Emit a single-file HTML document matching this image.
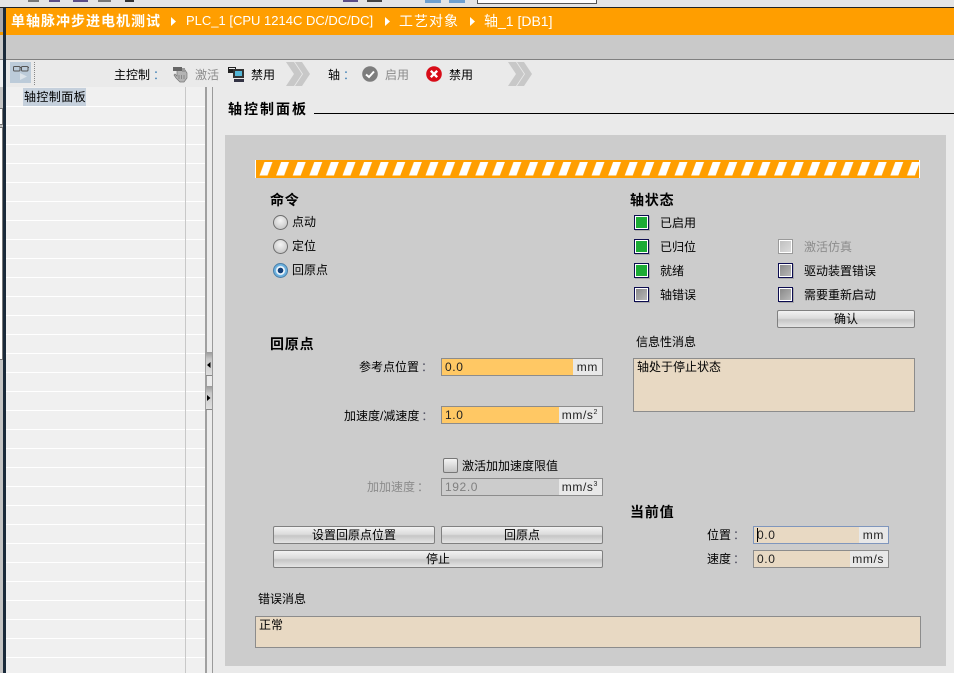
<!DOCTYPE html>
<html><head><meta charset="utf-8">
<style>
html,body{margin:0;padding:0}
body{width:954px;height:673px;overflow:hidden;position:relative;background:#eaeaea;font-family:"Liberation Sans","WenQuanYi Zen Hei","Noto Sans CJK SC",sans-serif;font-size:12px;color:#000}
div,svg{position:absolute;box-sizing:border-box}
.t{white-space:nowrap;line-height:16px;height:16px}
.b{font-weight:bold;font-size:14px;letter-spacing:.8px}
.g{color:#8c8c8c}
.c{color:#4a86b8;margin-left:3px}
.d{color:#556;margin-left:2px}
.r{width:15px;height:15px;border-radius:50%;border:1.5px solid #6e6e6e;background:radial-gradient(circle at 50% 35%,#f4f4f4,#bcbcbc)}
.s{width:15px;height:15px;border:1px solid #0c0c50;background:#fff;box-shadow:1px 1px 0 #aaa}
.s i{position:absolute;left:1px;top:1px;width:11px;height:11px;display:block}
.on i{background:#1bab35}
.off i{background:linear-gradient(135deg,#8a8a8a,#b8b8b8)}
.btn{background:linear-gradient(#f2f2f2,#dcdcdc 45%,#c6c6c6 55%,#e4e4e4);border:1px solid #808080;border-radius:2px;text-align:center;line-height:16px}
.inp{border:1px solid #8c8c8c;background:#e8e8e8;height:18px}
.inp i{position:absolute;left:0;top:0;bottom:0;display:block}
.inp b{position:absolute;left:3px;top:0;line-height:16px;font-weight:normal;letter-spacing:.6px;color:#222}
.inp u{position:absolute;right:4px;top:0;line-height:16px;text-decoration:none;letter-spacing:.6px;color:#222}
sup{font-size:7px;line-height:0}
</style></head><body>

<!-- top sliver -->
<div style="left:0;top:0;width:954px;height:7px;background:#e4e4e4"></div>
<div style="left:28px;top:0;width:11px;height:2px;background:#777"></div>
<div style="left:49px;top:0;width:11px;height:2px;background:#5b4d86"></div>
<div style="left:73px;top:0;width:15px;height:2px;background:#5b4d86"></div>
<div style="left:98px;top:0;width:13px;height:2px;background:#777"></div>
<div style="left:125px;top:0;width:9px;height:2px;background:#333"></div>
<div style="left:343px;top:0;width:15px;height:2px;background:#5b4d86"></div>
<div style="left:367px;top:0;width:15px;height:2px;background:#444"></div>
<div style="left:425px;top:0;width:16px;height:3px;background:#6fa0d0"></div>
<div style="left:449px;top:0;width:16px;height:3px;background:#6fa0d0"></div>
<div style="left:477px;top:0;width:120px;height:4px;background:#fff;border:1px solid #555;border-top:0"></div>
<div style="left:0;top:7px;width:954px;height:1px;background:#222"></div>

<!-- left strip -->
<div style="left:0;top:8px;width:3px;height:665px;background:#c4c4c4"></div>
<div style="left:0;top:8px;width:3px;height:24px;background:#a8a8ac"></div>
<div style="left:0;top:32px;width:3px;height:3px;background:#f29a00"></div>
<div style="left:0;top:35px;width:3px;height:24px;background:#c9c9c9"></div>
<div style="left:0;top:59px;width:3px;height:1px;background:#808080"></div>
<div style="left:0;top:60px;width:3px;height:27px;background:#f0f0f0"></div>
<div style="left:0;top:108px;width:3px;height:17px;background:#fff;border:1px solid #777;border-left:0"></div>
<div style="left:0;top:127px;width:3px;height:233px;background:#fff;border:1px solid #777;border-left:0"></div>
<div style="left:3px;top:8px;width:3px;height:665px;background:#1a2a3a"></div>

<!-- orange bar -->
<div style="left:6px;top:8px;width:948px;height:27px;background:#ff9e00"></div>
<div class="t" style="left:11px;top:13px;color:#fff;font-weight:bold;font-size:14px;letter-spacing:1px">单轴脉冲步进电机测试</div>
<svg style="left:171px;top:17px" width="6" height="9"><path d="M0 0L5 4.5L0 9Z" fill="#fff"/></svg>
<div class="t" style="left:186px;top:13px;color:#fff;font-size:13px">PLC_1 [CPU 1214C DC/DC/DC]</div>
<svg style="left:385px;top:17px" width="6" height="9"><path d="M0 0L5 4.5L0 9Z" fill="#fff"/></svg>
<div class="t" style="left:399px;top:13px;color:#fff;font-size:14px;letter-spacing:1px">工艺对象</div>
<svg style="left:470px;top:17px" width="6" height="9"><path d="M0 0L5 4.5L0 9Z" fill="#fff"/></svg>
<div class="t" style="left:484px;top:13px;color:#fff;font-size:14px">轴_1 [DB1]</div>

<!-- gray band -->
<div style="left:6px;top:35px;width:948px;height:24px;background:#c9c9c9"></div>
<div style="left:6px;top:59px;width:948px;height:1px;background:#808080"></div>

<!-- toolbar -->
<div style="left:6px;top:60px;width:948px;height:27px;background:#eaeaea"></div>
<div style="left:10px;top:62px;width:21px;height:21px;background:#bccbd9"></div>
<svg style="left:10px;top:62px" width="21" height="21"><rect x="3.500" y="4.500" width="6.500" height="4.500" rx="1" fill="none" stroke="#555"/><rect x="11.500" y="4.500" width="6.500" height="4.500" rx="1" fill="none" stroke="#555"/><path d="M10 5.500h1.500M18 5.500h1" stroke="#555"/><path d="M10 11l7 3.500-7 3.500z" fill="#dde4ea"/></svg>
<div style="left:34px;top:62px;width:1px;height:23px;border-left:1px dotted #888"></div>

<div class="t" style="left:114px;top:67px">主控制<span class="c">：</span></div>
<svg style="left:172px;top:66px" width="17" height="17"><path d="M5 6l0-2 8 0 2 3v5l-3 4H8L4 12 2 9l1-1 2 2z" fill="#b4b4b4" stroke="#777" stroke-width=".7"/><path d="M1 1h9v4H1z" fill="#666"/><path d="M10 2h3v4h-3z" fill="#999"/><path d="M7 9v4M9.500 9v4M12 9v4" stroke="#777" stroke-width=".7"/></svg>
<div class="t g" style="left:195px;top:67px">激活</div>
<svg style="left:228px;top:66px" width="18" height="17"><rect x="0" y="1" width="8" height="6" fill="#222"/><rect x="5" y="3" width="11" height="9" fill="#333"/><rect x="7" y="5" width="7" height="5" fill="#54b7d8"/><rect x="6" y="13" width="10" height="3" fill="#334"/><path d="M1 2h6v1H1z" fill="#eee"/></svg>
<div class="t" style="left:251px;top:67px">禁用</div>
<svg style="left:286px;top:62px" width="25" height="24"><path d="M0 0h8l8 12-8 12H0l8-12zM9 0h7l8 12-8 12H9l8-12z" fill="#c8c8c8"/></svg>

<div class="t" style="left:328px;top:67px">轴<span class="c">：</span></div>
<svg style="left:362px;top:66px" width="16" height="16"><circle cx="8" cy="8" r="7.800" fill="#7d7d7d"/><path d="M4 8.500l3 2.500 5-5.500" fill="none" stroke="#fff" stroke-width="2"/></svg>
<div class="t g" style="left:385px;top:67px">启用</div>
<svg style="left:426px;top:66px" width="16" height="16"><circle cx="8" cy="8" r="7.800" fill="#d80c18"/><path d="M4.800 4.800l6.400 6.400M11.200 4.800l-6.400 6.400" stroke="#fff" stroke-width="2.400"/></svg>
<div class="t" style="left:449px;top:67px">禁用</div>
<svg style="left:508px;top:62px" width="25" height="24"><path d="M0 0h8l8 12-8 12H0l8-12zM9 0h7l8 12-8 12H9l8-12z" fill="#c8c8c8"/></svg>

<!-- tree -->
<div style="left:6px;top:88px;width:199px;height:585px;background:repeating-linear-gradient(#f0f0f0 0,#f0f0f0 18px,#fff 18px,#fff 19px)"></div>
<div style="left:6px;top:87px;width:199px;height:1px;background:#f0f0f0"></div>
<div style="left:23px;top:88px;width:63px;height:18px;background:#c5d0dc"></div>
<div class="t" style="left:24px;top:89px;letter-spacing:.4px">轴控制面板</div>
<div style="left:185px;top:87px;width:1px;height:586px;background:#c8c8c8"></div>

<!-- splitter -->
<div style="left:205px;top:87px;width:2px;height:586px;background:#a0a0a0"></div>
<div style="left:207px;top:87px;width:5px;height:586px;background:#ececec"></div>
<div style="left:212px;top:87px;width:1px;height:586px;background:#9a9a9a"></div>
<div style="left:206px;top:352px;width:6px;height:24px;background:linear-gradient(#9a9a9a,#c8c8c8 30%,#e0e0e0)"></div>
<div style="left:206px;top:375px;width:6px;height:1px;background:#888"></div>
<div style="left:206px;top:386px;width:6px;height:24px;background:linear-gradient(#9a9a9a,#c8c8c8 30%,#e0e0e0)"></div>
<div style="left:206px;top:409px;width:6px;height:1px;background:#888"></div>
<svg style="left:207px;top:362px" width="4" height="6"><path d="M3.500 0v6L0 3z" fill="#000"/></svg>
<svg style="left:207px;top:395px" width="4" height="6"><path d="M0 0v6L3.500 3z" fill="#000"/></svg>

<!-- title -->
<div class="t b" style="left:228px;top:101px;letter-spacing:2px">轴控制面板</div>
<div style="left:314px;top:113px;width:640px;height:1px;background:#000"></div>

<!-- panel -->
<div style="left:225px;top:135px;width:721px;height:531px;background:#cccccc"></div>

<!-- hazard -->
<div style="left:255px;top:160px;width:665px;height:18px;background:#ff9e00;border-left:1px solid #fff;border-right:1px solid #fff;overflow:hidden">
<svg style="left:0;top:0" width="665" height="18"><defs><pattern id="h" width="16.6" height="18" patternUnits="userSpaceOnUse"><path d="M8.500 2h8l-5 13.500h-8z" fill="#fff"/></pattern></defs><rect x="0" y="0" width="665" height="18" fill="url(#h)"/></svg>
</div>

<!-- command -->
<div class="t b" style="left:270px;top:192px">命令</div>
<div class="r" style="left:273px;top:215px"></div>
<div class="t" style="left:292px;top:214px">点动</div>
<div class="r" style="left:273px;top:239px"></div>
<div class="t" style="left:292px;top:238px">定位</div>
<div class="r" style="left:273px;top:263px;border-color:#4b7fa8;background:radial-gradient(circle,#123f78 0 2.600px,#f2f8fc 3px 4px,#6bb0de 5px)"></div>
<div class="t" style="left:292px;top:262px">回原点</div>

<!-- axis status -->
<div class="t b" style="left:630px;top:192px">轴状态</div>
<div class="s on" style="left:634px;top:215px"><i></i></div>
<div class="t" style="left:660px;top:215px">已启用</div>
<div class="s on" style="left:634px;top:239px"><i></i></div>
<div class="t" style="left:660px;top:239px">已归位</div>
<div class="s on" style="left:634px;top:263px"><i></i></div>
<div class="t" style="left:660px;top:263px">就绪</div>
<div class="s off" style="left:634px;top:287px"><i></i></div>
<div class="t" style="left:660px;top:287px">轴错误</div>
<div class="s" style="left:778px;top:239px;border-color:#9a9a9a;box-shadow:none"><i style="background:linear-gradient(135deg,#c0c0c0,#dcdcdc)"></i></div>
<div class="t g" style="left:804px;top:239px">激活仿真</div>
<div class="s off" style="left:778px;top:263px"><i></i></div>
<div class="t" style="left:804px;top:263px">驱动装置错误</div>
<div class="s off" style="left:778px;top:287px"><i></i></div>
<div class="t" style="left:804px;top:287px">需要重新启动</div>
<div class="btn" style="left:777px;top:310px;width:138px;height:18px">确认</div>

<!-- homing -->
<div class="t b" style="left:270px;top:336px">回原点</div>
<div class="t" style="left:359px;top:359px">参考点位置<span class="d">：</span></div>
<div class="inp" style="left:441px;top:358px;width:162px"><i style="width:131px;background:#ffc864"></i><b>0.0</b><u>mm</u></div>
<div class="t" style="left:344px;top:408px">加速度/减速度<span class="d">：</span></div>
<div class="inp" style="left:441px;top:406px;width:162px"><i style="width:117px;background:#ffc864"></i><b>1.0</b><u>mm/s<sup>2</sup></u></div>
<div style="left:443px;top:458px;width:15px;height:15px;border:1px solid #777;border-radius:2px;background:linear-gradient(#f4f4f4,#c4c4c4)"></div>
<div class="t" style="left:462px;top:458px">激活加加速度限值</div>
<div class="t g" style="left:367px;top:479px">加加速度<span style="margin-left:2px">：</span></div>
<div class="inp" style="left:441px;top:478px;width:162px"><i style="width:117px;background:#cccccc"></i><b style="color:#808080">192.0</b><u>mm/s<sup>3</sup></u></div>

<div class="btn" style="left:273px;top:526px;width:162px;height:18px">设置回原点位置</div>
<div class="btn" style="left:441px;top:526px;width:162px;height:18px">回原点</div>
<div class="btn" style="left:273px;top:550px;width:330px;height:18px">停止</div>

<!-- info -->
<div class="t" style="left:636px;top:334px">信息性消息</div>
<div style="left:633px;top:358px;width:282px;height:54px;background:#e8d9c3;border:1px solid #8c8c8c"></div>
<div class="t" style="left:637px;top:359px">轴处于停止状态</div>

<!-- current values -->
<div class="t b" style="left:630px;top:504px">当前值</div>
<div class="t" style="left:707px;top:527px">位置<span class="d">：</span></div>
<div class="inp" style="left:753px;top:526px;width:136px;border-color:#7f96bd"><i style="width:105px;background:#e8d9c3"></i><b>0.0</b><u>mm</u></div>
<div style="left:757px;top:528px;width:1px;height:14px;background:#000"></div>
<div class="t" style="left:707px;top:551px">速度<span class="d">：</span></div>
<div class="inp" style="left:753px;top:550px;width:136px"><i style="width:96px;background:#e8d9c3"></i><b>0.0</b><u>mm/s</u></div>

<!-- error -->
<div class="t" style="left:258px;top:591px">错误消息</div>
<div style="left:255px;top:616px;width:666px;height:32px;background:#e8d9c3;border:1px solid #8c8c8c"></div>
<div class="t" style="left:259px;top:617px">正常</div>
</body></html>
